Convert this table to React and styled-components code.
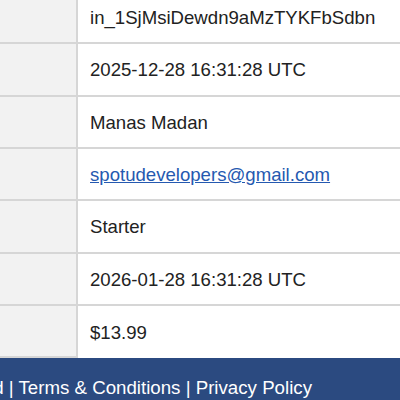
import React from "react"
import styled, { createGlobalStyle } from "styled-components"

const GlobalStyle = createGlobalStyle`
  html, body {
    margin: 0;
    padding: 0;
    background: #ffffff;
  }
  body {
    font-family: "Liberation Sans", Arial, sans-serif;
    width: 400px;
    height: 400px;
    overflow: hidden;
  }
`

const Page = styled.div`
  width: 400px;
  height: 400px;
  overflow: hidden;
  display: flex;
  flex-direction: column;
`

const Details = styled.div`
  display: grid;
  grid-template-columns: 78px 1fr;
  margin-top: -8px;
`

const Label = styled.div`
  height: 52.33px;
  box-sizing: border-box;
  background: #f2f2f2;
  border-right: 2px solid #d6d6d6;
  border-bottom: 2px solid #d6d6d6;
`

const Value = styled.div`
  height: 52.33px;
  box-sizing: border-box;
  padding: 2px 0 0 12px;
  display: flex;
  align-items: center;
  border-bottom: 2px solid #d6d6d6;
  font-size: 18.6px;
  color: #222222;
  white-space: nowrap;
  overflow: hidden;

  &:last-child {
    border-bottom: none;
  }

  a {
    color: #2559b0;
    text-decoration: underline;
  }
`

const Footer = styled.footer`
  flex: 1 0 auto;
  min-height: 60px;
  box-sizing: border-box;
  background: #2b4a80;
  color: #ffffff;
  display: flex;
  justify-content: flex-end;
  align-items: flex-start;
  padding: 19px 88px 0 0;
  font-size: 18.7px;
  white-space: nowrap;
  overflow: hidden;
`

const rows = [
  { value: "in_1SjMsiDewdn9aMzTYKFbSdbn" },
  { value: "2025-12-28 16:31:28 UTC" },
  { value: "Manas Madan" },
  { value: "spotudevelopers@gmail.com", email: true },
  { value: "Starter" },
  { value: "2026-01-28 16:31:28 UTC" },
  { value: "$13.99" },
]

const App = () => {
  return (
    <>
      <GlobalStyle />
      <Page>
        <Details>
          {rows.map((row, i) => (
            <React.Fragment key={i}>
              <Label />
              <Value>
                {row.email ? (
                  <a href={`mailto:${row.value}`}>{row.value}</a>
                ) : (
                  row.value
                )}
              </Value>
            </React.Fragment>
          ))}
        </Details>
        <Footer>
          © 2025 SpotU. All rights reserved | Terms &amp; Conditions | Privacy
          Policy
        </Footer>
      </Page>
    </>
  )
}

export default App
